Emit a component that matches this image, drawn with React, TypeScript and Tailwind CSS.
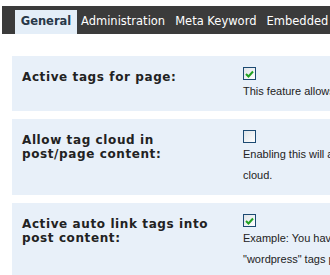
import React from "react";

const rows = [
  {
    label: ["Active tags for page:"],
    checked: true,
    desc: ["This feature allows you to display tags on pages."],
  },
  {
    label: ["Allow tag cloud in", "post/page content:"],
    checked: false,
    desc: ["Enabling this will allow you to display a tag", "cloud."],
  },
  {
    label: ["Active auto link tags into", "post content:"],
    checked: true,
    desc: ["Example: You have a tag called \"WordPress\", all", "\"wordpress\" tags present in your post content."],
  },
];

function Check({ on }: { on: boolean }) {
  return (
    <div className="w-[13px] h-[13px] border border-[#1c4a72] bg-gradient-to-br from-[#dfe4e8] to-white flex items-center justify-center">
      {on && (
        <svg width="9" height="8" viewBox="0 0 9 8">
          <path d="M1 4 L3.5 6.5 L8 1.5" stroke="#21a121" strokeWidth="2" fill="none" />
        </svg>
      )}
    </div>
  );
}

export default function App() {
  return (
    <div className="w-[330px] h-[275px] overflow-hidden bg-white font-['DejaVu_Sans',sans-serif]">
      {/* tab bar */}
      <div className="mt-[6px] ml-[2px] w-[500px] h-[28px] bg-[#3b3b3b] flex items-end pl-[13px] text-[11.5px] text-white whitespace-nowrap">
        <div className="h-[24px] w-[62px] bg-[#e4eef8] text-[#283848] font-bold flex items-center justify-center">
          General
        </div>
        <div className="h-[24px] flex items-center gap-[10px] pl-[4px]">
          <span>Administration</span>
          <span>Meta Keyword</span>
          <span>Embedded Tags</span>
        </div>
      </div>

      {/* settings rows */}
      <div className="mt-[22px] ml-[12px] w-[500px] flex flex-col gap-[8px]">
        {rows.map((r, i) => (
          <div key={i} className="bg-[#e8f0f9] flex pt-[11px] pb-[9px]">
            <div className="w-[231px] pl-[10px] pt-[3px] font-bold text-[12px] leading-[14px] text-[#222] tracking-[0.6px]">
              {r.label.map((l) => (
                <div key={l}>{l}</div>
              ))}
            </div>
            <div className="flex-1">
              <Check on={r.checked} />
              <div className="mt-[1px] text-[11px] leading-[21px] text-[#222] font-['Liberation_Sans',sans-serif] whitespace-nowrap">
                {r.desc.map((d) => (
                  <div key={d}>{d}</div>
                ))}
              </div>
            </div>
          </div>
        ))}
      </div>
    </div>
  );
}
